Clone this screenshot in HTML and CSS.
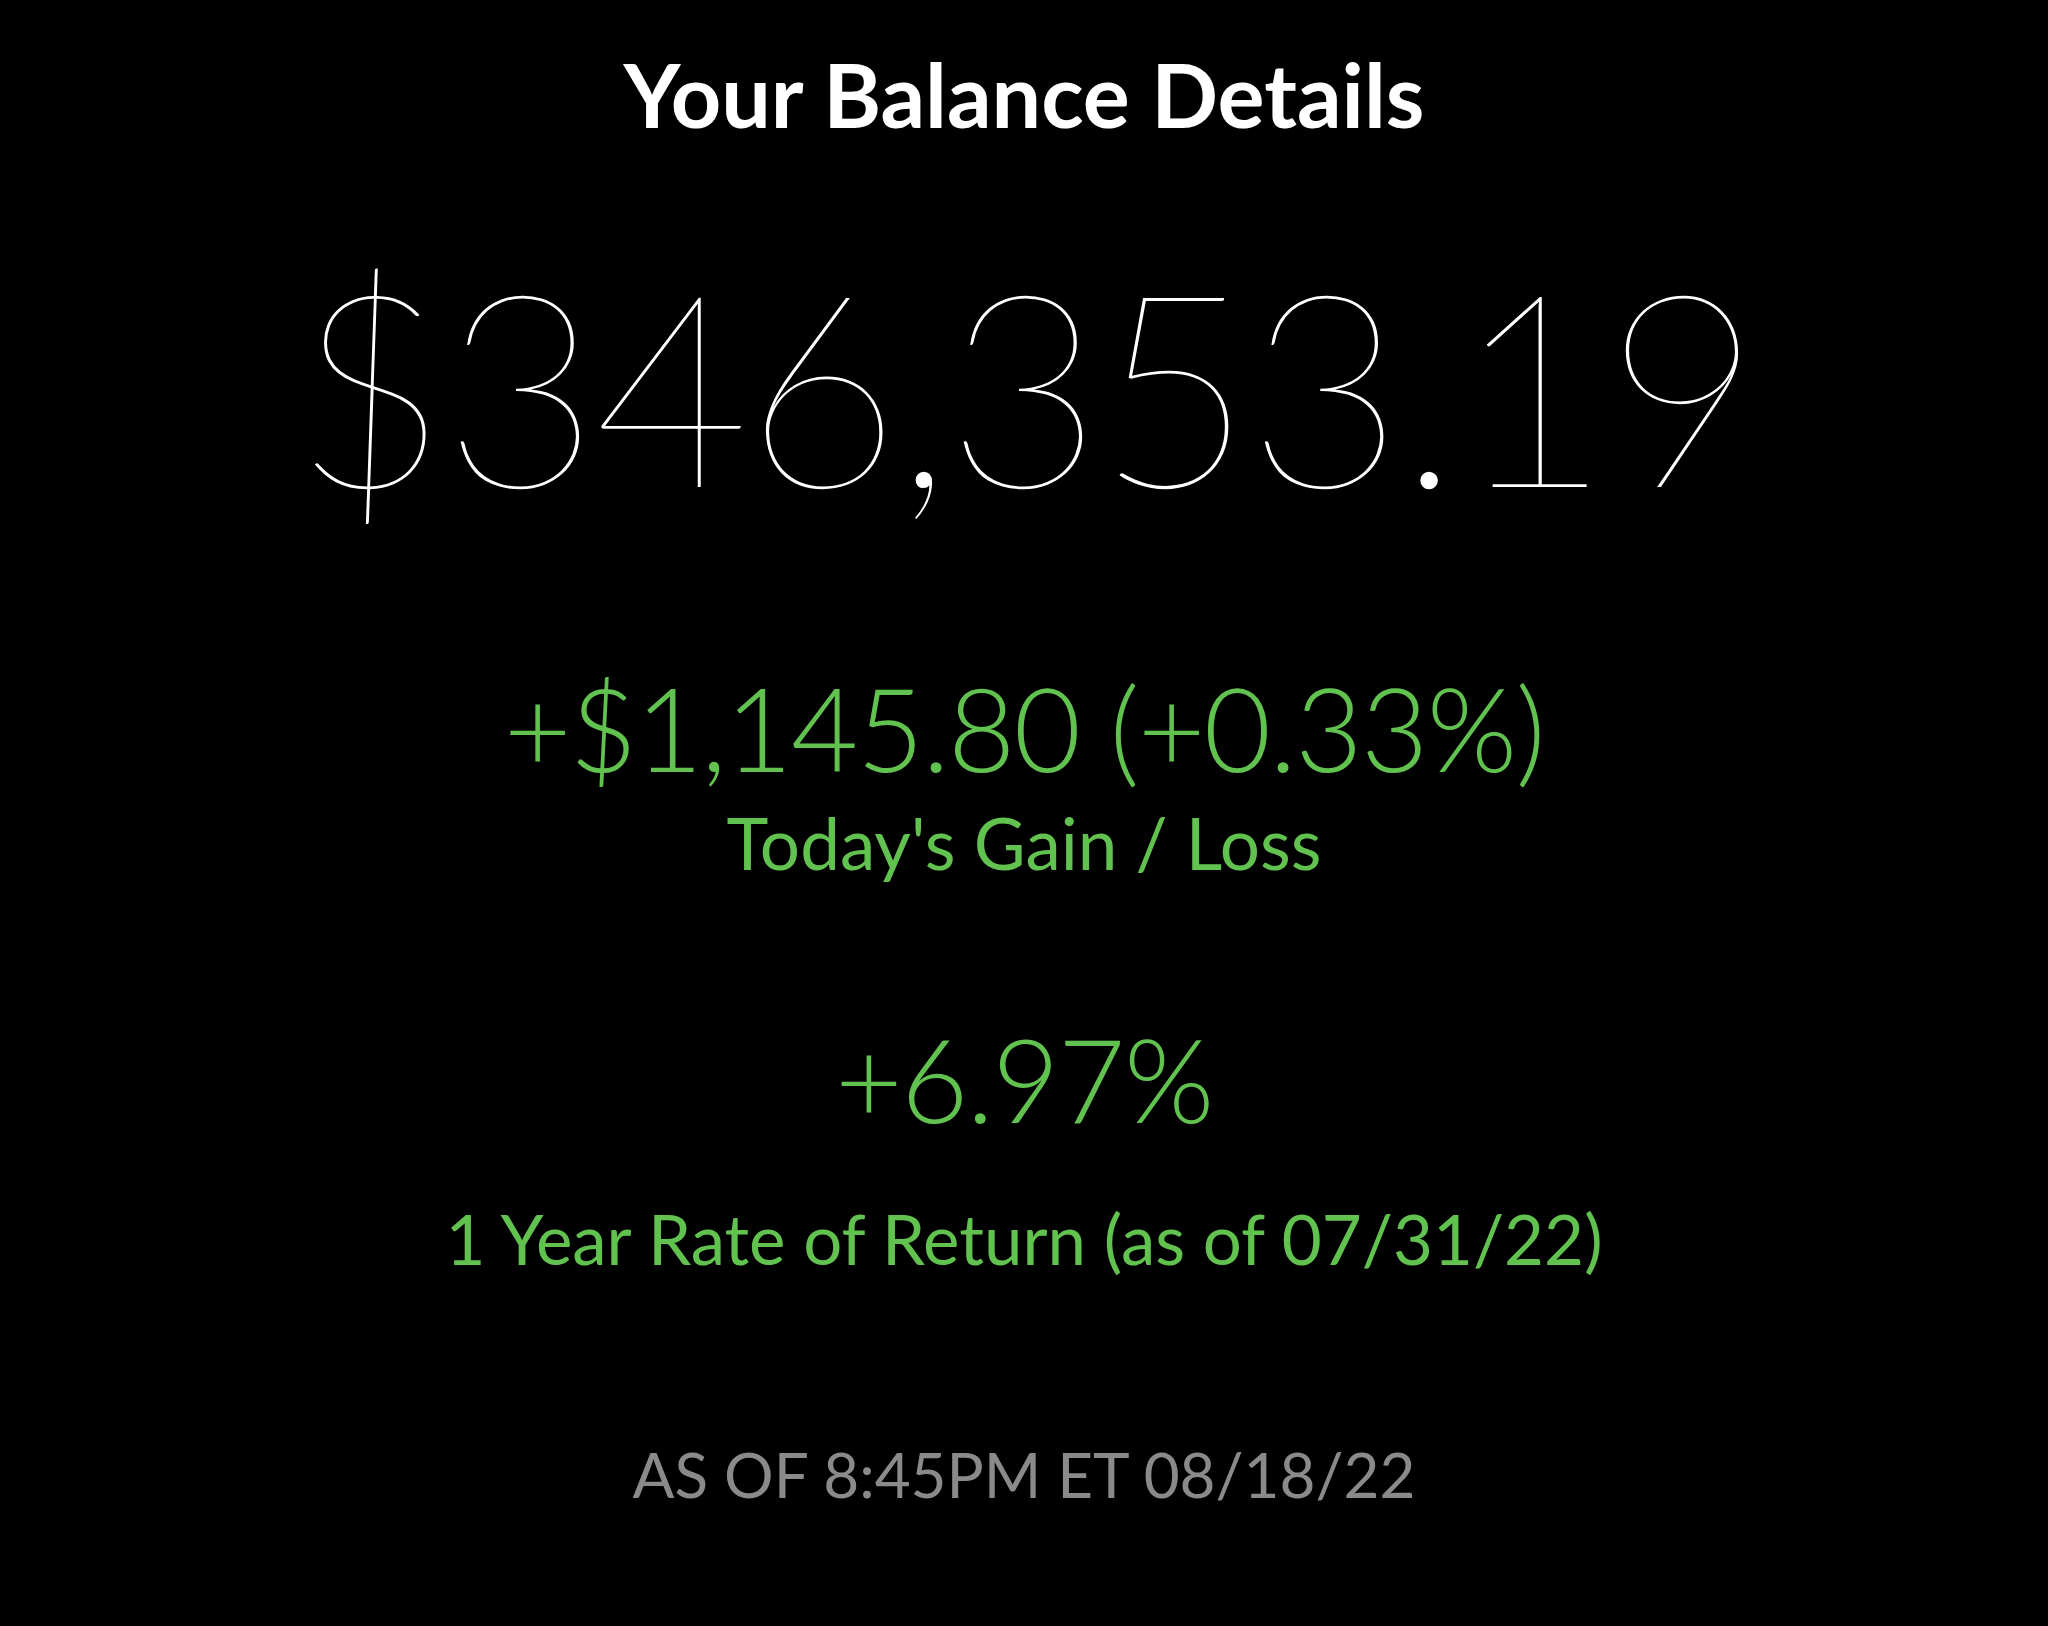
FILE: index.html
```html
<!DOCTYPE html>
<html lang="en">
<head>
  <meta charset="UTF-8" />
  <meta name="viewport" content="width=device-width, initial-scale=1.0"/>
  <title>Your Balance Details</title>
  <link rel="stylesheet" href="styles.css">
</head>
<body>
  <div class="container">
    <h1 class="title">Your Balance Details</h1>

    <div class="balance">$346,353.19</div>

    <div class="stat">
      <div class="stat-value">+$1,145.80 (+0.33%)</div>
      <div class="stat-label">Today's Gain / Loss</div>
    </div>

    <div class="stat stat-return">
      <div class="stat-value">+6.97%</div>
      <div class="stat-label">1 Year Rate of Return (as of 07/31/22)</div>
    </div>

    <div class="timestamp">AS OF 8:45PM ET 08/18/22</div>
  </div>
</body>
</html>
```

FILE: styles.css
```css
body {
  margin: 0;
  background-color: #000;
  color: #fff;
  font-family: Lato, "Open Sans", sans-serif;
}
.container {
  display: flex;
  flex-direction: column;
  align-items: center;
  text-align: center;
  min-height: 100vh;
}
.title {
  margin: 50px 0 0;
  font-size: 88px;
  font-weight: 700;
  line-height: 1;
}
.balance {
  margin-top: 110px;
  font-size: 270px;
  font-weight: 100;
  letter-spacing: -6px;
  line-height: 1;
}
.stat {
  display: flex;
  flex-direction: column;
  align-items: center;
  color: #62c24f;
}
.stat-value {
  margin-top: 152px;
  font-size: 116px;
  font-weight: 300;
  letter-spacing: -1.5px;
  line-height: 1;
}
.stat-label {
  margin-top: 21px;
  font-size: 71px;
  font-weight: 400;
  line-height: 1;
}
.stat-return .stat-value {
  margin-top: 143px;
}
.stat-return .stat-label {
  margin-top: 67px;
  font-size: 69px;
}
.timestamp {
  margin-top: 170px;
  font-size: 62px;
  color: #8a8a8a;
  line-height: 1;
}
```
